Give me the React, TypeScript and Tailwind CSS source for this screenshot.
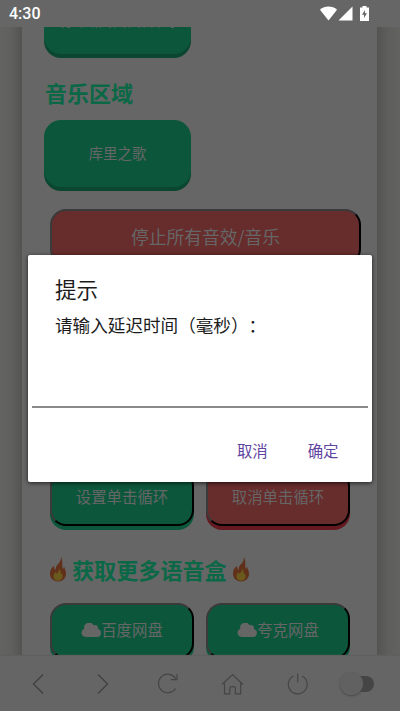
import type { ReactNode } from "react";

const Flame = (): JSX.Element => (
  <svg className="h-[26px] w-[18px] shrink-0" viewBox="0 0 18 26">
    <path
      d="M11.800 0.400c.6 3-.6 5.400-2.700 7.700-2 2.200-2.600 4-2.500 6C5.400 13 5 11.600 5 10 2.600 11.500 1 14.200 1 17.600 1 22.200 4.300 25.400 9 25.400s8-3.200 8-7.700c0-2.800-1.300-4.400-1.800-7-.7.8-1 1.500-1.100 2.500C12.300 9.600 14.500 5.600 11.800.4z"
      fill="#61301a"
    />
    <path
      d="M10.400 12.500c.2 2.600-2.100 3.500-2.700 5.500-.5-.5-.8-1.200-.8-2-1.600 1.200-2.500 2.600-2.500 4.400 0 2.500 2 4.300 4.600 4.300 2.700 0 4.700-1.800 4.700-4.400 0-1.300-.5-2-.6-3.200-.5.4-.8.8-.9 1.500-.9-2-.2-4.100-1.800-6.100z"
      fill="#69591c"
    />
  </svg>
);

const Cloud = (): JSX.Element => (
  <svg className="h-[14px] w-5 shrink-0" viewBox="0 0 20 14" fill="#666666">
    <path d="M16.800 6.100A3 3 0 0 0 12.600 2.300 5 5 0 0 0 3.300 5.700 4.300 4.300 0 0 0 4.500 14H16a4 4 0 0 0 .8-7.900z" />
  </svg>
);

interface SoundButtonProps {
  children: ReactNode;
}
const SoundButton = (props: SoundButtonProps): JSX.Element => (
  <button className="h-[67px] w-[147px] shrink-0 rounded-[17px] bg-[#0c573c] pb-0.5 text-[14.4px] text-[#666666] shadow-[0_4px_0_#0a4630]">
    {props.children}
  </button>
);

interface ActionButtonProps {
  children: ReactNode;
  red?: boolean;
}
const ActionButton = (props: ActionButtonProps): JSX.Element => (
  <button
    className={`flex h-14 w-36 shrink-0 items-center justify-center rounded-[16px] border-2 border-t-[#3a3a3a] border-r-black border-b-black border-l-[#3a3a3a] pb-0.5 text-[15.4px] text-[#666666] ${
      props.red
        ? "bg-[#672c2c] shadow-[0_4px_0_#651a22]"
        : "bg-[#0c573c] shadow-[0_4px_0_#0c573c]"
    }`}
  >
    {props.children}
  </button>
);

const StatusBar = (): JSX.Element => (
  <header className="flex h-[27px] shrink-0 items-center bg-[#666666] pl-[9px] text-white">
    <span className="grow pt-px font-[Roboto] text-[16px] font-medium">
      4:30
    </span>
    <svg className="h-[15px] w-[17px]" viewBox="0 0 17 15" fill="#fff">
      <path d="M0 3.800C4.500-.6 12.500-.6 17 3.800L8.500 14.500z" />
    </svg>
    <svg className="ml-px h-[15px] w-[15px]" viewBox="0 0 15 15" fill="#fff">
      <path d="M.5 14.500 14.500.5v14z" />
    </svg>
    <svg className="mr-[31px] ml-[7px] h-[15px] w-[9px]" viewBox="0 0 9 15">
      <path d="M2.500 0h4v1.400H9V15H0V1.400h2.500z" fill="#fff" />
      <path d="M5 4 2 8.800h2V12l3-4.800H5z" fill="#666" />
    </svg>
  </header>
);

const Toolbar = (): JSX.Element => (
  <footer className="z-10 flex h-[55px] shrink-0 items-center bg-[#656565] pl-[5.5px] shadow-[0_-1px_1px_#5f5f5f]">
    <svg className="h-8 w-[65px]" viewBox="0 0 65 32" fill="none" stroke="#434343" strokeWidth="1.500">
      <path d="M37 6.500 27.500 16l9.500 9.500" />
    </svg>
    <svg className="h-8 w-[65px]" viewBox="0 0 65 32" fill="none" stroke="#434343" strokeWidth="1.500">
      <path d="M27 6.500 36.500 16 27 25.500" />
    </svg>
    <svg className="h-8 w-[65px]" viewBox="0 0 65 32" fill="none" stroke="#454545" strokeWidth="1.200">
      <path d="M39.600 20.500A9.300 9.300 0 1 1 39.700 10.600M41 6v5.600h-6.200" />
    </svg>
    <svg className="h-8 w-[65px]" viewBox="0 0 65 32" fill="none" stroke="#454545" strokeWidth="1.200">
      <path d="M21 16.500 31.500 6.500 42 16.500M23.500 14.500v11.400h5.300v-5.400q0-1.800 1.800-1.800h2q1.800 0 1.800 1.800v5.400h5.300V14.500" />
    </svg>
    <svg className="h-8 w-[65px]" viewBox="0 0 65 32" fill="none" stroke="#454545" strokeWidth="1.200">
      <path d="M27.500 8A9.400 9.400 0 1 0 36 8M31.700 5.500v9" />
    </svg>
    <div className="ml-[9px] flex items-center">
      <div className="z-10 h-[23px] w-[23px] rounded-full bg-[#616161] shadow-[0_1px_2px_#4a4a4a]" />
      <div className="-ml-[13px] h-4 w-6 rounded-full bg-[#454545]" />
    </div>
  </footer>
);

const PromptDialog = (): JSX.Element => (
  <div
    role="dialog"
    className="absolute top-[255px] left-7 z-20 flex h-[227px] w-[344px] flex-col rounded-[2px] bg-white px-1 shadow-[0_1px_4px_rgba(0,0,0,0.7)]"
  >
    <h2 className="mt-[18px] ml-[23px] h-8 text-[21.5px] leading-8 text-[#1c1c1c]">
      提示
    </h2>
    <p className="mt-[7px] ml-[23px] h-[26px] text-[17.6px] leading-[26px] whitespace-nowrap text-[#1c1c1c] [text-spacing-trim:space-all]">
      请输入延迟时间（毫秒）：
    </p>
    <input className="mt-[29px] h-[41px] w-full border-b-2 border-[#8a8a8c] outline-none" />
    <div className="mt-[28px] flex justify-end gap-10 pr-[29.5px] text-[15.4px] leading-7 text-[#5f45a0]">
      <button>取消</button>
      <button>确定</button>
    </div>
  </div>
);

export default function App(): JSX.Element {
  return (
    <div className="relative flex h-[711px] w-[400px] flex-col overflow-hidden bg-[#5f5f5d] font-['Noto_Sans_CJK_SC',sans-serif]">
      <StatusBar />
      <main className="flex min-h-0 grow justify-center overflow-hidden">
        <div className="w-[22px] shrink-0 bg-linear-to-r from-[#636362] via-[#60605f] to-[#535351]" />
        <section className="flex w-[355px] shrink-0 flex-col bg-[#666666] pl-[22px]">
          <div className="-mt-10">
            <SoundButton>你干嘛哈哈哈哎哟</SoundButton>
          </div>
          <h2 className="mt-[22px] h-8 pl-px text-[22px] leading-8 font-bold text-[#0b6846]">
            音乐区域
          </h2>
          <div className="mt-[12px] flex">
            <SoundButton>库里之歌</SoundButton>
          </div>
          <button className="mt-[22px] ml-1.5 h-14 w-[311px] shrink-0 rounded-[16px] border-2 border-t-[#3a3a3a] border-r-black border-b-black border-l-[#3a3a3a] bg-[#672c2c] pb-0.5 text-[17.8px] text-[#666666]">
            停止所有音效/音乐
          </button>
          <div className="mt-[205px] flex gap-3 pl-1.5">
            <ActionButton>设置单击循环</ActionButton>
            <ActionButton red>取消单击循环</ActionButton>
          </div>
          <h2 className="mt-[27px] flex h-8 items-center gap-[5px] pl-[5px] text-[22.1px] leading-8 font-bold text-[#0b6846]">
            <Flame />
            <span>获取更多语音盒</span>
            <Flame />
          </h2>
          <div className="mt-[18px] flex gap-3 pl-1.5">
            <ActionButton>
              <Cloud />
              百度网盘
            </ActionButton>
            <ActionButton>
              <Cloud />
              夸克网盘
            </ActionButton>
          </div>
        </section>
        <div className="w-[23px] shrink-0 bg-linear-to-r from-[#545453] via-[#5e5e5c] to-[#62625f]" />
      </main>
      <Toolbar />
      <PromptDialog />
    </div>
  );
}
